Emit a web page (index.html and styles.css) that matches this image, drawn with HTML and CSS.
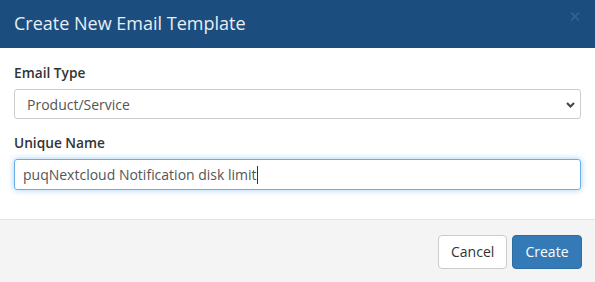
FILE: index.html
```html
<!DOCTYPE html>
<html>
<head>
<meta charset="utf-8">
<link rel="stylesheet" href="styles.css">
</head>
<body>
<div class="modal">
  <div class="modal-header">
    <h4 class="title">Create New Email Template</h4>
    <svg class="close" width="10" height="9" viewBox="0 0 10 9"><path d="M1 0.5 L9 8.5 M9 0.5 L1 8.5" fill="none" stroke="#33628f" stroke-width="1.8"/></svg>
  </div>
  <div class="modal-body">
    <div class="group">
      <label class="label">Email Type</label>
      <div class="select">
        <span>Product/Service</span>
        <svg class="chev" width="9" height="6" viewBox="0 0 9 6"><path d="M1 1 L4.5 4.5 L8 1" fill="none" stroke="#444" stroke-width="2"/></svg>
      </div>
    </div>
    <div class="group">
      <label class="label">Unique Name</label>
      <div class="input focus"><span>puqNextcloud Notification disk limit</span><span class="caret"></span></div>
    </div>
  </div>
  <div class="modal-footer">
    <button class="btn btn-default">Cancel</button>
    <button class="btn btn-primary">Create</button>
  </div>
</div>
</body>
</html>
```
FILE: styles.css
```css
* { box-sizing: border-box; }
html, body { margin: 0; padding: 0; }
body {
  width: 595px;
  height: 282px;
  font-family: "Open Sans", "Noto Sans", sans-serif;
  background: #fff;
  overflow: hidden;
}
.modal { display: flex; flex-direction: column; height: 282px; }
.modal-header {
  height: 48px;
  background: #1b4d7e;
  display: flex;
  align-items: center;
  justify-content: space-between;
  padding: 0 15px 0 14px;
}
.title {
  margin: 0;
  font-size: 18px;
  font-weight: 400;
  color: #e8eef4;
  line-height: 24px;
  margin-top: -2px;
}
.close {
  align-self: flex-start;
  margin-top: 12px;
}
.modal-body {
  padding: 15px 14px 0 14px;
  height: 171px;
  display: flex;
  flex-direction: column;
  gap: 14px;
}
.group { display: flex; flex-direction: column; }
.label {
  font-size: 13.7px;
  font-weight: 600;
  color: #333;
  line-height: 20px;
  margin-bottom: 6px;
}
.select, .input {
  height: 30px;
  border: 1px solid #ccc;
  border-radius: 3px;
  font-size: 14px;
  color: #555;
  display: flex;
  align-items: center;
}
.select { padding: 0 5px 0 12px; justify-content: space-between; }
.chev { margin-top: 1px; }
.input { padding: 0 8px; height: 31px; }
.input.focus {
  border-color: #66afe9;
  box-shadow: 0 0 6px rgba(102,175,233,0.6);
}
.caret {
  display: inline-block;
  width: 1px;
  height: 18px;
  background: #333;
}
.modal-footer {
  flex: 1;
  background: #f4f4f4;
  border-top: 1px solid #e2e2e2;
  display: flex;
  justify-content: flex-end;
  align-items: flex-start;
  padding: 15px 13px 0 0;
  gap: 5px;
}
.btn {
  font-family: "Open Sans", "Noto Sans", sans-serif;
  font-size: 14px;
  height: 34px;
  padding: 0 12px;
  border-radius: 4px;
  line-height: 1;
}
.btn-default {
  width: 69px;
  background: #fff;
  border: 1px solid #ccc;
  color: #333;
}
.btn-primary {
  width: 70px;
  background: #337ab7;
  border: 1px solid #2e6da4;
  color: #fff;
}
```
